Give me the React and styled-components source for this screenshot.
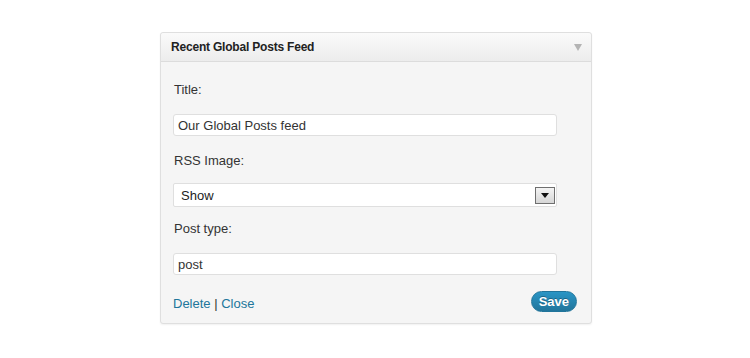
import React from 'react';
import styled, { createGlobalStyle } from 'styled-components';

const GlobalStyle = createGlobalStyle`
  html, body { margin: 0; padding: 0; background: #fff; }
  body { font-family: "Liberation Sans", Arial, sans-serif; color: #333; }
`;

const Page = styled.div`
  width: 750px;
  height: 358px;
  padding: 32px 0 0 160px;
  box-sizing: border-box;
`;

const Widget = styled.div`
  width: 432px;
  box-sizing: border-box;
  background: #f5f5f5;
  border: 1px solid #dfdfdf;
  border-radius: 3px;
  box-shadow: 0 1px 2px rgba(0, 0, 0, 0.06);
`;

const Header = styled.div`
  height: 28px;
  display: flex;
  align-items: center;
  justify-content: space-between;
  padding: 0 9px 0 10px;
  background: linear-gradient(to bottom, #fafafa, #ececec);
  border-bottom: 1px solid #dcdcdc;
  border-radius: 3px 3px 0 0;
`;

const HeaderTitle = styled.h3`
  margin: 0;
  font-size: 12px;
  font-weight: bold;
  letter-spacing: -0.2px;
  color: #222;
`;

const Toggle = styled.span`
  width: 0;
  height: 0;
  border-left: 4px solid transparent;
  border-right: 4px solid transparent;
  border-top: 7px solid #b4b4b4;
`;

const Body = styled.div`
  padding: 20px 34px 11px 12px;
  display: flex;
  flex-direction: column;
`;

const Label = styled.label`
  display: block;
  font-size: 13px;
  line-height: 16px;
  color: #333;
  margin: ${(p) => p.$top}px 0 ${(p) => p.$bottom}px 1px;
`;

const TextInput = styled.input`
  height: 22px;
  box-sizing: border-box;
  border: 1px solid #dfdfdf;
  border-radius: 3px;
  background: #fff;
  font-family: "Liberation Sans", Arial, sans-serif;
  font-size: 13px;
  color: #333;
  padding: 0 4px;
  outline: none;
`;

const Select = styled.div`
  height: 24px;
  box-sizing: border-box;
  border: 1px solid #dfdfdf;
  border-radius: 2px;
  background: #fff;
  display: flex;
  align-items: center;
  justify-content: space-between;
  padding: 0 1px 0 7px;
  font-size: 13px;
  color: #222;
`;

const SelectButton = styled.span`
  width: 20px;
  height: 17px;
  box-sizing: border-box;
  border: 1px solid #6f6f6f;
  background: linear-gradient(to bottom, #f4f4f4, #d6d6d6);
  display: flex;
  align-items: center;
  justify-content: center;
  &::after {
    content: '';
    border-left: 4px solid transparent;
    border-right: 4px solid transparent;
    border-top: 5px solid #111;
  }
`;

const Footer = styled.div`
  display: flex;
  align-items: center;
  justify-content: space-between;
  margin: 16px -20px 0 0;
  font-size: 13px;
`;

const Links = styled.div`
  color: #333;
  padding-top: 4px;
`;

const Link = styled.a`
  color: #21759b;
  text-decoration: none;
`;

const SaveButton = styled.button`
  height: 21px;
  padding: 0 7px;
  border: 1px solid #21759b;
  border-radius: 11px;
  background: linear-gradient(to bottom, #2a95c5, #21759b);
  color: #fff;
  font-family: "Liberation Sans", Arial, sans-serif;
  font-size: 13px;
  font-weight: bold;
  text-shadow: 0 -1px 0 rgba(0, 0, 0, 0.3);
`;

export default function App() {
  return (
    <>
      <GlobalStyle />
      <Page>
        <Widget>
          <Header>
            <HeaderTitle>Recent Global Posts Feed</HeaderTitle>
            <Toggle />
          </Header>
          <Body>
            <Label $top={0} $bottom={16}>Title:</Label>
            <TextInput defaultValue="Our Global Posts feed" />
            <Label $top={17} $bottom={14}>RSS Image:</Label>
            <Select>
              Show
              <SelectButton />
            </Select>
            <Label $top={14} $bottom={16}>Post type:</Label>
            <TextInput defaultValue="post" />
            <Footer>
              <Links>
                <Link href="#">Delete</Link> | <Link href="#">Close</Link>
              </Links>
              <SaveButton>Save</SaveButton>
            </Footer>
          </Body>
        </Widget>
      </Page>
    </>
  );
}
